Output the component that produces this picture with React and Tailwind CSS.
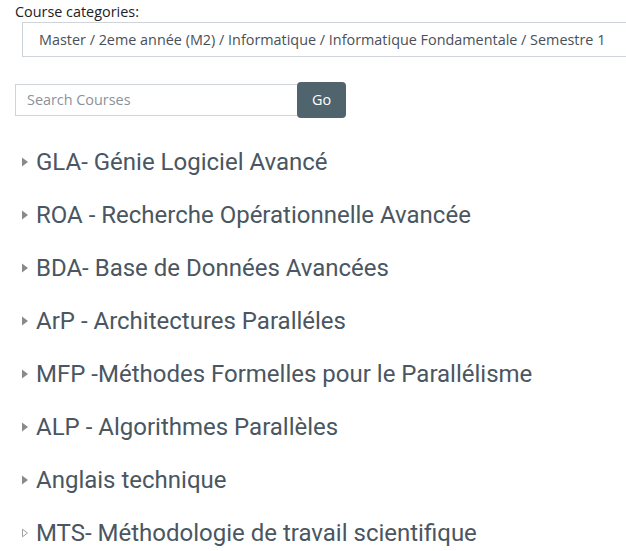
import React from "react";

const courses = [
  "GLA- Génie Logiciel Avancé",
  "ROA - Recherche Opérationnelle Avancée",
  "BDA- Base de Données Avancées",
  "ArP - Architectures Paralléles",
  "MFP -Méthodes Formelles pour le Parallélisme",
  "ALP - Algorithmes Parallèles",
  "Anglais technique",
  "MTS- Méthodologie de travail scientifique",
];

function Tri({ hollow }) {
  return (
    <svg width="8" height="10" viewBox="0 0 8 10" className="shrink-0">
      {hollow ? (
        <path d="M1.5 1.2 L6.5 5 L1.5 8.8 Z" fill="none" stroke="#a0a0a0" strokeWidth="1" />
      ) : (
        <path d="M1 0.5 L7 5 L1 9.5 Z" fill="#8a8a8a" />
      )}
    </svg>
  );
}

export default function App() {
  return (
    <div className="w-[626px] h-[551px] overflow-hidden bg-white" style={{ fontFamily: "'Open Sans', sans-serif" }}>
      <div className="pl-[15px] pt-[2px] text-[14.4px] leading-[19px] text-[#1d2125]">Course categories:</div>
      <div className="ml-[22px] mt-[1px] h-[35px] border border-r-0 border-[#ced4da] flex items-center pl-[16px] text-[14.4px] text-[#495057] whitespace-nowrap">
        Master / 2eme année (M2) / Informatique / Informatique Fondamentale / Semestre 1
      </div>
      <div className="ml-[15px] mt-[25px] flex items-center">
        <div className="w-[282px] h-[32px] border border-r-0 border-[#ced4da] flex items-center pl-[11px] text-[14.4px] text-[#8a929a]">
          Search Courses
        </div>
        <div className="w-[49px] h-[36px] rounded-[4px] bg-[#4f646d] text-white text-[14.4px] flex items-center justify-center">
          Go
        </div>
      </div>
      <div className="mt-[17px] flex flex-col" style={{ fontFamily: "Roboto, sans-serif" }}>
        {courses.map((c, i) => (
          <div key={i} className="h-[53px] flex items-center pl-[21px] gap-[7px] text-[24px] text-[#4a5661] whitespace-nowrap">
            <Tri hollow={i === courses.length - 1} />
            <span>{c}</span>
          </div>
        ))}
      </div>
    </div>
  );
}
